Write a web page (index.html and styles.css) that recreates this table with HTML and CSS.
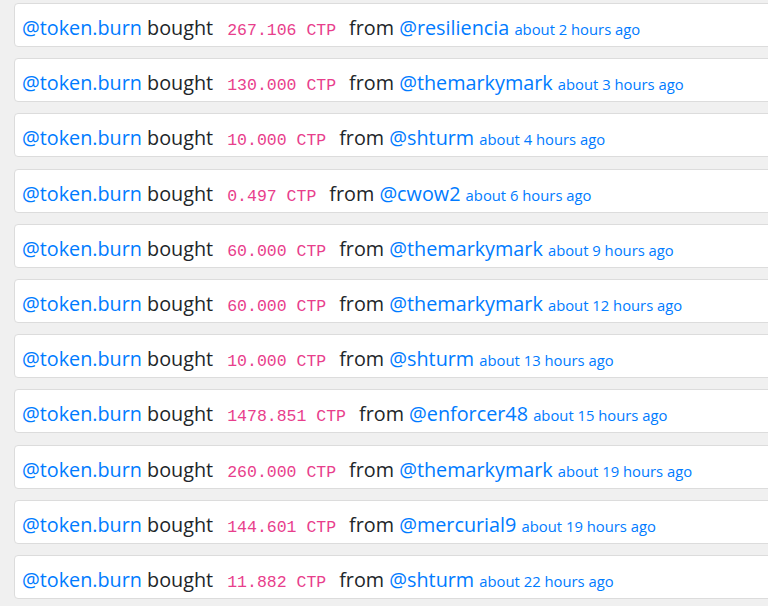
FILE: index.html
```html
<!DOCTYPE html>
<html lang="en">
<head>
  <meta charset="UTF-8">
  <title>CTP burn feed</title>
  <link rel="stylesheet" href="styles.css">
</head>
<body>
  <ul class="feed" id="feed"></ul>

  <script>
    const compras = [
      ['267.106', 'resiliencia', 'about 2 hours ago'],
      ['130.000', 'themarkymark', 'about 3 hours ago'],
      ['10.000', 'shturm', 'about 4 hours ago'],
      ['0.497', 'cwow2', 'about 6 hours ago'],
      ['60.000', 'themarkymark', 'about 9 hours ago'],
      ['60.000', 'themarkymark', 'about 12 hours ago'],
      ['10.000', 'shturm', 'about 13 hours ago'],
      ['1478.851', 'enforcer48', 'about 15 hours ago'],
      ['260.000', 'themarkymark', 'about 19 hours ago'],
      ['144.601', 'mercurial9', 'about 19 hours ago'],
      ['11.882', 'shturm', 'about 22 hours ago']
    ];

    const lista = document.getElementById('feed');
    compras.forEach(c => {
      const item = document.createElement('li');
      item.className = 'card';
      item.innerHTML = `
        <a class="user" href="#">@token.burn</a>&nbsp;bought
        <code class="amount">${c[0]} CTP</code>
        from&nbsp;<a class="user" href="#">@${c[1]}</a>&nbsp;<small class="when">${c[2]}</small>
      `;
      lista.appendChild(item);
    });
  </script>
</body>
</html>
```

FILE: styles.css
```css
html, body {
  overflow-x: hidden;
}

body {
  margin: 0;
  padding-top: 3px;
  background: #f0f0f0;
  font-family: 'Open Sans', sans-serif;
  color: #212529;
}

.feed {
  list-style: none;
  margin: 0 -40px 0 14px;
  padding: 0;
}

.card {
  display: flex;
  align-items: baseline;
  height: 44px;
  box-sizing: border-box;
  padding: 10px 7px 0;
  margin-bottom: 11.2px;
  background: #fff;
  border: 1px solid #dcdcdc;
  border-radius: 4px;
  font-size: 19.8px;
  white-space: nowrap;
}

.user {
  color: #007bff;
  text-decoration: none;
}

.amount {
  font-family: 'Liberation Mono', monospace;
  font-size: 16.5px;
  color: #e83e8c;
  margin: 0 13px 0 14px;
}

.when {
  font-size: 14.8px;
  color: #007bff;
}
```
